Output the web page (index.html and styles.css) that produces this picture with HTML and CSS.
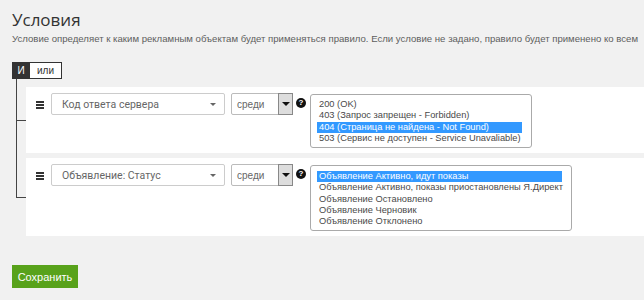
FILE: index.html
```html
<!DOCTYPE html>
<html lang="ru">
  <head>
    <meta charset="UTF-8" />
    <title>Условия</title>
    <link rel="stylesheet" href="styles.css">
  </head>
  <body>
    <div class="page">
      <h2 class="title">Условия</h2>
      <p class="hint">Условие определяет к каким рекламным объектам будет применяться правило. Если условие не задано, правило будет применено ко всем</p>

      <div class="logic">
        <div class="logic-btn active">И</div>
        <div class="logic-btn">ИЛИ</div>
      </div>

      <div class="rules">
        <div class="rule">
          <div class="drag"><span></span><span></span><span></span></div>
          <div class="select field">
            Код ответа сервера
            <span class="caret"></span>
          </div>
          <div class="select op">
            среди
            <span class="op-arrow"><span class="tri"></span></span>
          </div>
          <div class="help">?</div>
          <div class="listbox codes">
            <div class="opt">200 (OK)</div>
            <div class="opt">403 (Запрос запрещен - Forbidden)</div>
            <div class="opt selected">404 (Страница не найдена - Not Found)</div>
            <div class="opt">503 (Сервис не доступен - Service Unavaliable)</div>
          </div>
        </div>

        <div class="rule">
          <div class="drag"><span></span><span></span><span></span></div>
          <div class="select field">
            Объявление: Статус
            <span class="caret"></span>
          </div>
          <div class="select op">
            среди
            <span class="op-arrow"><span class="tri"></span></span>
          </div>
          <div class="help">?</div>
          <div class="listbox statuses">
            <div class="opt selected">Объявление Активно, идут показы</div>
            <div class="opt">Объявление Активно, показы приостановлены Я.Директ</div>
            <div class="opt">Объявление Остановлено</div>
            <div class="opt">Объявление Черновик</div>
            <div class="opt">Объявление Отклонено</div>
          </div>
        </div>
      </div>

      <button class="save">Сохранить</button>
    </div>
  </body>
</html>
```

FILE: styles.css
```css
body {
  margin: 0;
  background: #f1f1f1;
  color: #333;
  font-family: "Liberation Sans", Arial, sans-serif;
  overflow: hidden;
}

.page {
  padding: 9px 0 0 12px;
}

.title {
  margin: 0;
  font-family: "Open Sans", sans-serif;
  font-weight: normal;
  font-size: 17px;
  line-height: 22px;
  color: #333;
}

.hint {
  margin: 1px 0 0;
  font-size: 9.6px;
  line-height: 14px;
  color: #5e5e5e;
  white-space: nowrap;
}

.logic {
  display: flex;
  margin-top: 16px;
  height: 17px;
}

.logic-btn {
  display: flex;
  align-items: center;
  justify-content: center;
  font-size: 10px;
  text-transform: lowercase;
  background: #fff;
  border: 1px solid #333;
  border-left: none;
  padding: 0 7px;
  color: #333;
}

.logic-btn.active {
  text-transform: none;
  background: #333;
  color: #fff;
  border-left: 1px solid #333;
  width: 18px;
  padding: 0;
  box-sizing: border-box;
}

.rules {
  position: relative;
  margin-left: 4px;
  padding-top: 8px;
  padding-left: 10px;
}

.rules::before {
  content: "";
  position: absolute;
  left: 0;
  top: 0;
  bottom: 39px;
  border-left: 1px solid #444;
}

.rule {
  position: relative;
  display: flex;
  align-items: flex-start;
  background: #fff;
  padding: 6px 0 5px 10px;
  margin-bottom: 5px;
}

.rule::before {
  content: "";
  position: absolute;
  left: -10px;
  top: 50%;
  width: 10px;
  border-top: 1px solid #444;
}

.drag {
  display: flex;
  flex-direction: column;
  gap: 1px;
  width: 8px;
  margin: 8px 7px 0 0;
}

.drag span {
  height: 2px;
  background: #333;
}

.select {
  position: relative;
  box-sizing: border-box;
  height: 22px;
  display: flex;
  align-items: center;
  background: #fff;
  border: 1px solid #ccc;
  border-radius: 2px;
}

.field {
  width: 174px;
  padding-left: 10px;
  font-family: Roboto, sans-serif;
  font-size: 10.5px;
  color: #666;
}

.caret {
  position: absolute;
  right: 8px;
  top: 9px;
  border-left: 3px solid transparent;
  border-right: 3px solid transparent;
  border-top: 3px solid #666;
}

.op {
  width: 62px;
  margin-left: 6px;
  padding-left: 5px;
  font-size: 10px;
  color: #666;
  border-color: #bbb;
}

.op-arrow {
  position: absolute;
  right: -1px;
  top: -1px;
  bottom: -1px;
  width: 15px;
  display: flex;
  align-items: center;
  justify-content: center;
  background: #ddd;
  border: 1px solid #888;
  box-sizing: border-box;
}

.tri {
  border-left: 4px solid transparent;
  border-right: 4px solid transparent;
  border-top: 4px solid #111;
}

.help {
  width: 10px;
  height: 10px;
  margin: 5px 4px 0 3px;
  border-radius: 50%;
  background: #111;
  color: #fff;
  font-size: 8px;
  font-weight: bold;
  line-height: 10px;
  text-align: center;
}

.listbox {
  box-sizing: border-box;
  margin-top: 1px;
  padding: 4px 9px 4px 6px;
  border: 1px solid #aaa;
  border-radius: 3px;
  background: #fff;
  font-size: 9.3px;
  color: #4a4a4a;
}

.codes {
  width: 222px;
  height: 54px;
}

.statuses {
  width: 262px;
  height: 66px;
  padding-top: 5px;
}

.opt {
  padding-left: 2px;
  line-height: 11.3px;
  white-space: nowrap;
}

.opt.selected {
  background: #3399ff;
  color: #fff;
}

.save {
  margin-top: 24px;
  width: 66px;
  height: 23px;
  padding: 0;
  border: none;
  background: #58a21b;
  color: #fff;
  font-family: "Liberation Sans", Arial, sans-serif;
  font-size: 11px;
}
```
